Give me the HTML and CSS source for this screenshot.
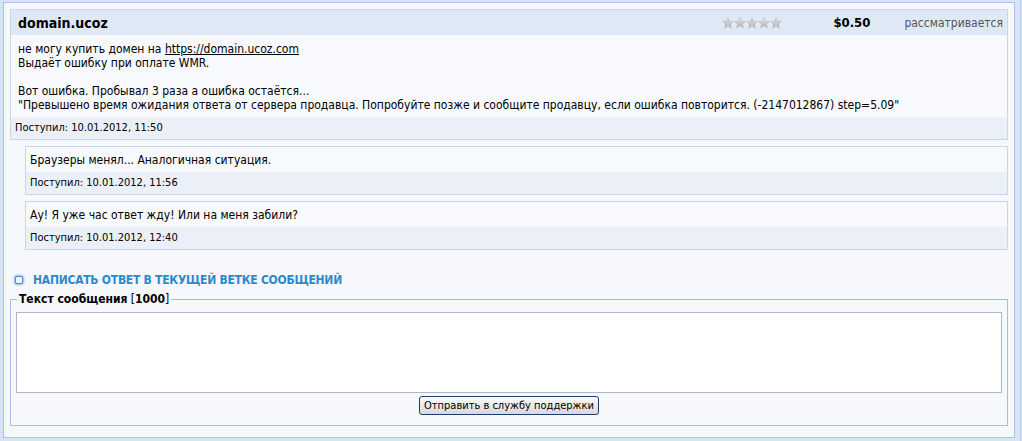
FILE: index.html
```html
<!DOCTYPE html>
<html lang="ru">
<head>
<meta charset="utf-8">
<title>domain.ucoz</title>
<link rel="stylesheet" href="styles.css">
</head>
<body>
<div class="frame">
  <div class="panel">
    <div class="msg">
      <div class="msg-head">
        <div class="msg-title">domain.ucoz</div>
        <div class="stars">
          <svg width="60" height="12" viewBox="0 0 60 12">
            <defs>
              <linearGradient id="sg" x1="0" y1="0" x2="0" y2="1">
                <stop offset="0" stop-color="#e6e6e6"/>
                <stop offset="1" stop-color="#b0b0b0"/>
              </linearGradient>
              <path id="st" d="M6 0.5 L7.5 4.3 L11.5 4.5 L8.4 7 L9.4 11 L6 8.8 L2.6 11 L3.6 7 L0.5 4.5 L4.5 4.3 Z"/>
            </defs>
            <use href="#st" x="0" fill="url(#sg)" stroke="#bcbcbc" stroke-width="0.6"/>
            <use href="#st" x="12" fill="url(#sg)" stroke="#bcbcbc" stroke-width="0.6"/>
            <use href="#st" x="24" fill="url(#sg)" stroke="#bcbcbc" stroke-width="0.6"/>
            <use href="#st" x="36" fill="url(#sg)" stroke="#bcbcbc" stroke-width="0.6"/>
            <use href="#st" x="48" fill="url(#sg)" stroke="#bcbcbc" stroke-width="0.6"/>
          </svg>
        </div>
        <div class="price">$0.50</div>
        <div class="status">рассматривается</div>
      </div>
      <div class="msg-body">не могу купить домен на <a href="#">https://domain.ucoz.com</a><br>Выдаёт ошибку при оплате WMR.<br><br>Вот ошибка. Пробывал 3 раза а ошибка остаётся...<br>"Превышено время ожидания ответа от сервера продавца. Попробуйте позже и сообщите продавцу, если ошибка повторится. (-2147012867) step=5.09"</div>
      <div class="msg-foot">Поступил: 10.01.2012, 11:50</div>
    </div>

    <div class="msg reply">
      <div class="msg-body">Браузеры менял... Аналогичная ситуация.</div>
      <div class="msg-foot">Поступил: 10.01.2012, 11:56</div>
    </div>

    <div class="msg reply">
      <div class="msg-body">Ау! Я уже час ответ жду! Или на меня забили?</div>
      <div class="msg-foot">Поступил: 10.01.2012, 12:40</div>
    </div>

    <div class="answer-head"><span class="bullet"></span>НАПИСАТЬ ОТВЕТ В ТЕКУЩЕЙ ВЕТКЕ СООБЩЕНИЙ</div>

    <fieldset class="answer">
      <legend><b>Текст сообщения</b> [<b>1000</b>]</legend>
      <textarea class="answer-text"></textarea>
      <div class="answer-actions"><button class="send" type="button">Отправить в службу поддержки</button></div>
    </fieldset>
  </div>
</div>
</body>
</html>
```

FILE: styles.css
```css
html, body {
  margin: 0;
  padding: 0;
}
body {
  background: #d6e4f5;
  font-family: "DejaVu Sans Condensed", "DejaVu Sans", sans-serif;
  font-stretch: condensed;
  font-size: 12px;
  color: #000;
  width: 1022px;
  height: 441px;
  overflow: hidden;
}
.frame {
  width: 1021px;
  height: 441px;
  border-right: 1px solid #b9cde9;
  box-sizing: border-box;
  padding: 2px 0 0 3px;
}
.panel {
  width: 1012px;
  height: 436px;
  box-sizing: border-box;
  border: 1px solid #a7c2ea;
  background: #f6f8fc;
  padding: 6px;
}
.msg {
  border: 1px solid #c8d7ec;
  background: #f7f9fd;
}
.msg-head {
  display: flex;
  align-items: center;
  height: 25px;
  background: #dfe8f5;
  padding: 0 4px 0 7px;
}
.msg-title {
  font-weight: bold;
  font-size: 14px;
  flex: 1;
}
.stars {
  display: flex;
  margin-right: 51px;
}
.stars svg { display: block; }
.price {
  font-weight: bold;
  font-size: 13px;
  margin-right: 34px;
}
.status {
  color: #555;
}
.msg-body {
  padding: 7px 7px 5px 7px;
  line-height: 14px;
}
.msg-body a {
  color: #000;
  text-decoration: underline;
}
.msg-foot {
  background: #eaeff8;
  height: 22px;
  line-height: 22px;
  padding: 0 4px;
  font-size: 11px;
}
.reply {
  margin: 6px 0 0 15px;
}
.reply + .reply {
  margin-top: 6px;
}
.reply .msg-body {
  padding: 6px 4px 5px 4px;
}
.answer-head {
  display: flex;
  align-items: center;
  margin: 23px 0 0 5px;
  color: #2e88cc;
  font-weight: bold;
  font-size: 12px;
  letter-spacing: -0.25px;
  height: 14px;
}
.bullet {
  width: 6px;
  height: 6px;
  border: 1px solid #3c8fd8;
  border-radius: 2px;
  background: #eef6ff;
  box-shadow: 0 0 2px 1px #8cc0f0;
  margin-right: 10px;
}
.answer {
  margin: 5px 0 0 0;
  padding: 0 5px 10px 5px;
  border: 1px solid #a8bde6;
  min-width: 0;
}
.answer legend {
  padding: 0 2px;
  margin-left: 1px;
  font-size: 12px;
}
.answer-text {
  display: block;
  width: 100%;
  box-sizing: border-box;
  height: 81px;
  margin: 6px 0 0 0;
  border: 1px solid #b1b5ca;
  background: #fff;
  resize: none;
}
.answer-actions {
  display: flex;
  justify-content: center;
  padding-top: 3px;
}
.send {
  font-family: "DejaVu Sans Condensed", "DejaVu Sans", sans-serif;
  font-stretch: condensed;
  font-size: 11px;
  height: 19px;
  padding: 0 4px;
  border: 1px solid #1e3c6c;
  border-radius: 3px;
  background: linear-gradient(#fbfbfb, #e6e6e6 60%, #d8d8d8);
  color: #000;
}
```
